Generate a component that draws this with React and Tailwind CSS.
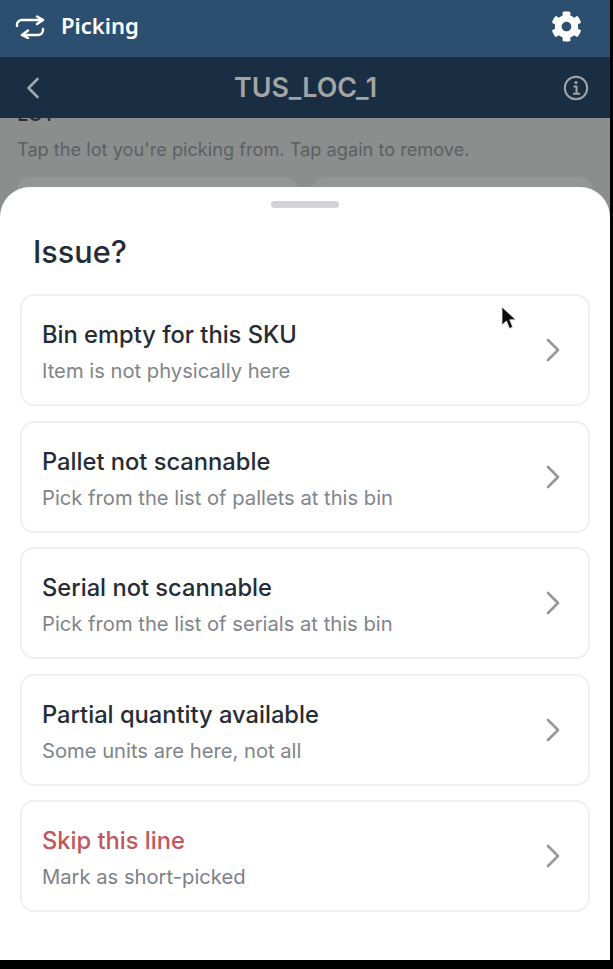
import React from 'react';
import { ChevronLeft, ChevronRight } from 'lucide-react';
import { FaCog } from 'react-icons/fa';

const issues = [
  { title: 'Bin empty for this SKU', sub: 'Item is not physically here' },
  { title: 'Pallet not scannable', sub: 'Pick from the list of pallets at this bin' },
  { title: 'Serial not scannable', sub: 'Pick from the list of serials at this bin' },
  { title: 'Partial quantity available', sub: 'Some units are here, not all' },
  { title: 'Skip this line', sub: 'Mark as short-picked', danger: true },
];

const IssueRow = ({ title, sub, danger }) => (
  <div className="flex h-[112px] items-center justify-between rounded-[14px] border-2 border-[#eff0f0] bg-white pl-[20px] pr-[15px]">
    <div className="flex flex-col pt-[6px]">
      <span className={`text-[23.7px] leading-[28px] font-medium ${danger ? 'text-[#c2575b]' : 'text-[#262c36]'}`}>
        {title}
      </span>
      <span className={`mt-[8px] text-[20.2px] leading-[28px] ${danger ? 'text-[#7c8087]' : 'text-[#80848b]'}`}>
        {sub}
      </span>
    </div>
    <ChevronRight className="h-[40px] w-[40px] text-[#96989b]" strokeWidth={1.6} />
  </div>
);

export default function App() {
  return (
    <div className="h-[969px] w-[613px] overflow-hidden bg-black font-['Inter',sans-serif]">
      <div className="relative h-[960px] w-[610px] overflow-hidden bg-[#8b8e8d]">
        {/* App header */}
        <div className="relative z-10 flex h-[57px] items-center justify-between bg-[#2c4f70] pb-[4px] pl-[15px] pr-[28px]">
          <div className="flex items-center gap-[15px]">
            <svg className="h-[24px] w-[31px] text-white" viewBox="15 14 31 24" fill="none" stroke="currentColor" strokeWidth="2.4" strokeLinecap="round" strokeLinejoin="round">
              <path d="M17 25v-1a5 5 0 0 1 5-5h21" />
              <path d="M37 15.5l6 3.5-6 4" />
              <path d="M43 28v1a5 5 0 0 1-5 5H22" />
              <path d="M28 29.5l-6 4.500 6 3" />
            </svg>
            <span className="-mt-[2px] font-['Noto_Sans',sans-serif] text-[22px] font-semibold text-white">Picking</span>
          </div>
          <FaCog className="h-[31px] w-[31px] text-white" />
        </div>

        {/* Location bar */}
        <div className="relative z-10 flex h-[61px] items-center justify-between bg-[#192d43] pl-[15px] pr-[21px]">
          <ChevronLeft className="h-[36px] w-[36px] text-[#a3a5a5]" strokeWidth={1.8} />
          <span className="pr-[3px] text-[26.8px] font-semibold text-[#a3a5a5]">TUS_LOC_1</span>
          <svg className="h-[26px] w-[26px] text-[#a3a5a5]" viewBox="0 0 26 26" fill="none" stroke="currentColor">
            <circle cx="13" cy="13" r="11.2" strokeWidth="2" />
            <path d="M10.5 11.500H13.500V18.500M10 18.700H17" strokeWidth="2" />
            <circle cx="13" cy="7.500" r="1.600" fill="currentColor" stroke="none" />
          </svg>
        </div>

        {/* Dimmed page behind the sheet */}
        <div className="px-[17px]">
          <div className="-mt-[16px] text-[20px] leading-[24px] font-medium text-[#2b2e30]">LOT</div>
          <p className="mt-[9px] text-[18.2px] leading-[28px] text-[#5c6062]">
            Tap the lot you're picking from. Tap again to remove.
          </p>
          <div className="mt-[14px] flex gap-[13px]">
            <div className="h-[60px] w-[283px] rounded-[14px] bg-[#939695]" />
            <div className="h-[60px] w-[283px] rounded-[14px] bg-[#939695]" />
          </div>
        </div>

        {/* Bottom sheet */}
        <div className="absolute inset-x-0 bottom-0 z-20 flex h-[773px] flex-col rounded-t-[30px] bg-white px-[20px]">
          <div className="mx-auto mt-[14px] h-[7px] w-[68px] rounded-full bg-[#d2d3d6]" />
          <h2 className="mt-[24px] pl-[13px] text-[30.6px] leading-[40px] font-medium text-[#262c36]">Issue?</h2>
          <div className="mt-[22px] flex flex-col gap-[14.5px]">
            {issues.map((item) => (
              <IssueRow key={item.title} {...item} />
            ))}
          </div>
        </div>

        {/* Mouse pointer from the recording */}
        <svg className="absolute left-[500px] top-[306px] z-30 h-[26px] w-[17px]" viewBox="0 0 17 26">
          <path d="M2 1v18l4.500-4 3 7.500 3.200-1.400-3-7.300h6z" fill="#0b0b0b" stroke="#e4e4e4" strokeWidth="0.8" />
        </svg>
      </div>
    </div>
  );
}
